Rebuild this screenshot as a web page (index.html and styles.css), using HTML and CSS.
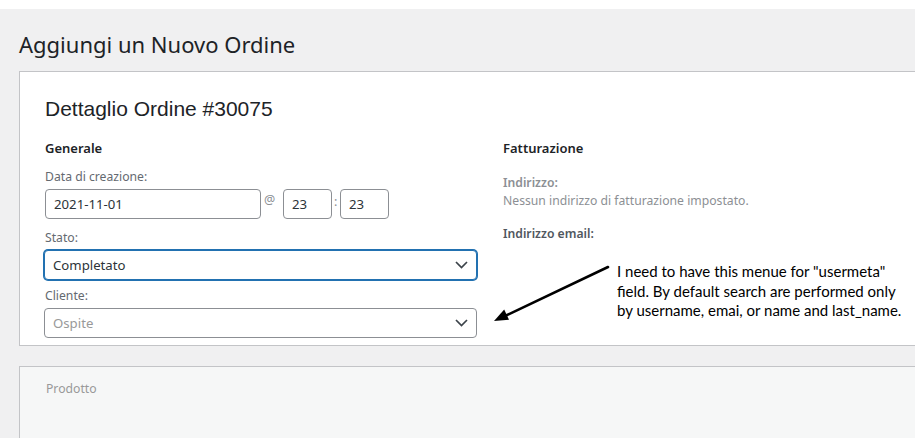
FILE: index.html
```html
<!DOCTYPE html>
<html lang="it">
<head>
<meta charset="utf-8">
<title>Aggiungi un Nuovo Ordine</title>
<link rel="stylesheet" href="styles.css">
</head>
<body>
<div class="adminbar"></div>
<div class="wrap">
  <h1 class="page-title">Aggiungi un Nuovo Ordine</h1>

  <div class="postbox order-data">
    <h2 class="order-title">Dettaglio Ordine #30075</h2>
    <div class="columns">
      <div class="col col-general">
        <h3 class="col-title">Generale</h3>
        <label class="field-label">Data di creazione:</label>
        <div class="date-row">
          <div class="input input-date">2021-11-01</div>
          <span class="sep sep-at">@</span>
          <div class="input input-time">23</div>
          <span class="sep sep-colon">:</span>
          <div class="input input-time">23</div>
        </div>
        <label class="field-label">Stato:</label>
        <div class="select is-focused">
          <span class="select-value">Completato</span>
          <svg class="chevron" width="13" height="8" viewBox="0 0 13 8"><polyline points="1,1 6.5,6.5 12,1" fill="none" stroke="#3c434a" stroke-width="1.7"/></svg>
        </div>
        <label class="field-label">Cliente:</label>
        <div class="select">
          <span class="select-value is-placeholder">Ospite</span>
          <svg class="chevron" width="13" height="8" viewBox="0 0 13 8"><polyline points="1,1 6.5,6.5 12,1" fill="none" stroke="#3c434a" stroke-width="1.7"/></svg>
        </div>
      </div>
      <div class="col col-billing">
        <h3 class="col-title">Fatturazione</h3>
        <p class="address">
          <strong class="address-label">Indirizzo:</strong><br>
          Nessun indirizzo di fatturazione impostato.
        </p>
        <p class="email">
          <strong class="email-label">Indirizzo email:</strong>
        </p>
      </div>
    </div>
  </div>

  <div class="postbox items">
    <div class="items-head">Prodotto</div>
  </div>
</div>

<svg class="note-arrow" width="915" height="438" viewBox="0 0 915 438">
  <line x1="608" y1="267" x2="505" y2="316" stroke="#000" stroke-width="2.6" stroke-linecap="round"/>
  <polygon points="494,321 509,319.8 504.2,309.6" fill="#000"/>
</svg>
<p class="note">I need to have this menue for "usermeta"<br>field. By default search are performed only<br>by username, emai, or name and last_name.</p>
</body>
</html>
```

FILE: styles.css
```css
html, body {
  margin: 0;
  padding: 0;
}

body {
  background: #f0f0f1;
  color: #3c434a;
  font-family: "Noto Sans", "Open Sans", sans-serif;
  font-size: 12.2px;
  overflow: hidden;
  height: 438px;
  position: relative;
}

.adminbar {
  height: 9px;
  background: #ffffff;
}

.wrap {
  padding-left: 19px;
}

.page-title {
  margin: 0;
  padding: 20px 0 0 0;
  font-size: 22px;
  line-height: 30px;
  font-weight: 400;
  color: #1d2327;
  box-sizing: border-box;
  height: 62px;
}

.postbox {
  background: #ffffff;
  border: 1px solid #c3c4c7;
  border-right: none;
}

.order-data {
  padding: 24px 0 7px 25px;
}

.order-title {
  margin: 0;
  font-family: "Liberation Sans", Arial, sans-serif;
  font-size: 21px;
  line-height: 26px;
  font-weight: 400;
  color: #1d2327;
  height: 42px;
}

.columns {
  display: flex;
  gap: 25px;
}

.col-general {
  width: 433px;
  display: flex;
  flex-direction: column;
}

.col-title {
  margin: 0;
  font-size: 13px;
  line-height: 20px;
  font-weight: 600;
  color: #1d2327;
  height: 30px;
}

.field-label {
  display: block;
  color: #646970;
  line-height: 18px;
  height: 21px;
}

.date-row {
  display: flex;
  align-items: flex-start;
  height: 40px;
}

.input {
  box-sizing: border-box;
  height: 30px;
  border: 1px solid #8c8f94;
  border-radius: 4px;
  background: #fff;
  color: #2c3338;
  font-size: 13.2px;
  line-height: 28px;
  padding: 0 8px;
}

.input-date {
  width: 216px;
}

.input-time {
  width: 49px;
}

.sep {
  color: #8c8f94;
  font-size: 12.5px;
  line-height: 22px;
}

.sep-at {
  width: 22px;
  padding-left: 3px;
  box-sizing: border-box;
}

.sep-colon {
  width: 8px;
  padding-left: 2px;
  box-sizing: border-box;
  line-height: 26px;
}

.select {
  box-sizing: border-box;
  height: 30px;
  width: 433px;
  margin-left: -1px;
  border: 1px solid #8c8f94;
  border-radius: 4px;
  background: #fff;
  display: flex;
  align-items: center;
  justify-content: space-between;
  padding: 0 8px 0 8px;
}

.select.is-focused {
  border-color: #2271b1;
  box-shadow: 0 0 0 1px #2271b1;
  margin-bottom: 7px;
}

.select-value {
  font-size: 13.2px;
  color: #2c3338;
}

.select-value.is-placeholder {
  color: #999999;
}

.col-billing {
  flex: 1;
}

.address, .email {
  margin: 0;
  line-height: 18px;
  color: #8c8f94;
}

.address {
  margin-top: 6px;
  height: 51px;
}

.address-label {
  font-weight: 600;
  color: #8c8f94;
}

.email-label {
  font-weight: 600;
  color: #50575e;
}

.items {
  margin-top: 20px;
  background: #f6f7f7;
  border-bottom: none;
  height: 58px;
  padding: 13px 0 0 26px;
}

.items-head {
  color: #999999;
  line-height: 18px;
}

.note-arrow {
  position: absolute;
  left: 0;
  top: 0;
  pointer-events: none;
}

.note {
  position: absolute;
  left: 617px;
  top: 262px;
  margin: 0;
  font-family: Lato, "Liberation Sans", sans-serif;
  font-size: 15px;
  line-height: 19.5px;
  color: #000;
}
```
